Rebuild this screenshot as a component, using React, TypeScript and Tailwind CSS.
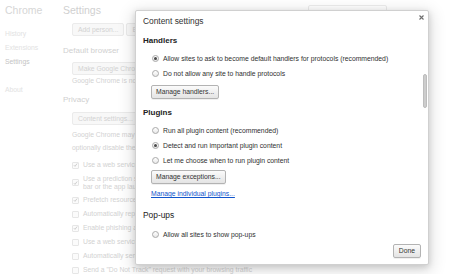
import React from 'react';

const navItems = [
    { label: 'History', active: false },
    { label: 'Extensions', active: false },
    { label: 'Settings', active: true },
];

const privacyChecks: { label: string[]; checked: boolean }[] = [
    { label: ['Use a web service to help resolve navigation errors'], checked: true },
    { label: ['Use a prediction service to help complete searches and URLs typed in the address', 'bar or the app launcher search box'], checked: true },
    { label: ['Prefetch resources to load pages more quickly'], checked: true },
    { label: ['Automatically report details of possible security incidents to Google'], checked: false },
    { label: ['Enable phishing and malware protection'], checked: true },
    { label: ['Use a web service to help resolve spelling errors'], checked: false },
    { label: ['Automatically send usage statistics and crash reports to Google'], checked: false },
    { label: ['Send a "Do Not Track" request with your browsing traffic'], checked: false },
];

const BgButton: React.FC<{ label: string }> = ({ label }) => (
    <div className="h-[13px] px-[5px] flex items-center rounded-[2px] border border-[#ebebeb] bg-[#f8f8f8] text-[6.8px] leading-[8px] text-[#d2d2d2] whitespace-nowrap shrink-0">
        {label}
    </div>
);

const BgCheck: React.FC<{ checked: boolean }> = ({ checked }) => (
    <span className="w-[7px] h-[7px] rounded-[1px] border border-[#e6e6e6] bg-[#fbfbfb] flex items-center justify-center shrink-0">
        {checked && (
            <svg width="6" height="6" viewBox="0 0 6 6">
                <path d="M1 3.2 L2.4 4.6 L5 1.2" fill="none" stroke="#c4c4c4" strokeWidth="1" />
            </svg>
        )}
    </span>
);

const Radio: React.FC<{ checked?: boolean }> = ({ checked }) => (
    <span className="w-[7px] h-[7px] rounded-full border border-[#a9a9a9] bg-linear-to-b from-white to-[#e8e8e8] flex items-center justify-center shrink-0">
        {checked && <span className="w-[3px] h-[3px] rounded-full bg-[#4a4a4a]" />}
    </span>
);

const RadioRow: React.FC<{ label: string; checked?: boolean }> = ({ label, checked }) => (
    <div className="h-[15px] pl-[9px] flex items-center gap-[4px]">
        <Radio checked={checked} />
        <span className="text-[6.8px] leading-[8px] text-[#303030] whitespace-nowrap">{label}</span>
    </div>
);

const DlgButton: React.FC<{ label: string; className?: string }> = ({ label, className = '' }) => (
    <button className={`h-[14px] px-[4px] w-fit flex items-center rounded-[2px] border border-[#b3b3b3] bg-linear-to-b from-[#fbfbfb] to-[#e4e4e4] text-[6.8px] leading-[8px] text-[#333] whitespace-nowrap shadow-[0_1px_0_rgba(0,0,0,0.06)] ${className}`}>
        {label}
    </button>
);

const ContentSettingsDialog: React.FC = () => (
    <div className="absolute left-[135px] top-[10px] w-[294px] h-[255px] bg-white rounded-[2px] border border-[#d0d0d0] shadow-[0_2px_6px_rgba(0,0,0,0.15),0_4px_16px_3px_rgba(0,0,0,0.12)] flex flex-col">
        {/* header */}
        <div className="h-[20px] shrink-0 pl-[7px] pr-[4px] flex items-center justify-between">
            <span className="text-[8.4px] leading-[10px] text-[#333]">Content settings</span>
            <svg width="5" height="5" viewBox="0 0 5 5" className="self-start mt-[4px]">
                <path d="M0.5 0.5 L4.5 4.5 M4.5 0.5 L0.5 4.5" stroke="#6e6e6e" strokeWidth="1.1" />
            </svg>
        </div>

        {/* scrolling body */}
        <div className="relative h-[213px] shrink-0 overflow-hidden pl-[7px]">
            <div className="h-[20px] flex items-center text-[8px] leading-[10px] font-bold text-[#222]">Handlers</div>
            <RadioRow label="Allow sites to ask to become default handlers for protocols (recommended)" checked />
            <RadioRow label="Do not allow any site to handle protocols" />
            <DlgButton label="Manage handlers..." className="mt-[4px] ml-[8px]" />

            <div className="mt-[4px] h-[20px] flex items-center text-[8px] leading-[10px] font-bold text-[#222]">Plugins</div>
            <RadioRow label="Run all plugin content (recommended)" />
            <RadioRow label="Detect and run important plugin content" checked />
            <RadioRow label="Let me choose when to run plugin content" />
            <DlgButton label="Manage exceptions..." className="mt-[2px] ml-[8px]" />
            <div className="mt-[2px] h-[16px] pl-[8px] flex items-center">
                <span className="text-[6.8px] leading-[8px] text-[#1155cc] underline whitespace-nowrap">Manage individual plugins...</span>
            </div>

            <div className="mt-[3px] h-[20px] flex items-center text-[8.4px] leading-[10px] text-[#222]">Pop-ups</div>
            <div className="mt-[2px]">
                <RadioRow label="Allow all sites to show pop-ups" />
            </div>

            {/* scrollbar */}
            <div className="absolute right-[1px] top-[43px] w-[4px] h-[34px] rounded-[2px] bg-[#cdcdcd] border border-[#bdbdbd]" />
        </div>

        {/* footer */}
        <div className="flex-1 flex justify-end pr-[7px]">
            <DlgButton label="Done" className="px-[5px]" />
        </div>
    </div>
);

export default function App() {
    return (
        <div className="relative w-[449px] h-[274px] overflow-hidden bg-white flex font-['Liberation_Sans',Arial,sans-serif]">
            {/* left nav */}
            <nav className="w-[63px] shrink-0 pl-[5px]">
                <div className="h-[20px] flex items-center text-[10.5px] leading-[12px] text-[#d6d6d6]">Chrome</div>
                <div className="mt-[7px]">
                    {navItems.map((item) => (
                        <div
                            key={item.label}
                            className={`h-[14px] flex items-center text-[6.8px] leading-[8px] ${item.active ? 'text-[#c4c4c4]' : 'text-[#e2e2e2]'}`}
                        >
                            {item.label}
                        </div>
                    ))}
                </div>
                <div className="mt-[14px] h-[14px] flex items-center text-[6.8px] leading-[8px] text-[#e2e2e2]">About</div>
            </nav>

            {/* settings page behind the overlay */}
            <main className="flex-1 min-w-0">
                <div className="h-[20px] flex justify-between pr-[62px]">
                    <span className="self-center text-[10.5px] leading-[12px] text-[#d0d0d0]">Settings</span>
                    <div className="mt-[5px] w-[79px] h-[14px] rounded-[2px] border border-[#ececec]" />
                </div>

                <div className="pl-[9px]">
                    <div className="mt-[3px] flex gap-[2px]">
                        <BgButton label="Add person..." />
                        <BgButton label="Edit..." />
                        <BgButton label="Remove..." />
                    </div>
                </div>

                <div className="mt-[5px] h-[20px] flex items-center text-[8px] leading-[10px] text-[#d0d0d0]">Default browser</div>
                <div className="pl-[9px]">
                    <div className="mt-[1px] flex">
                        <BgButton label="Make Google Chrome the default browser" />
                    </div>
                    <div className="h-[12px] flex items-center text-[6.8px] leading-[8px] text-[#d2d2d2] whitespace-nowrap">
                        Google Chrome is not currently your default browser.
                    </div>
                </div>

                <div className="mt-[3px] h-[20px] flex items-center text-[8px] leading-[10px] text-[#d0d0d0]">Privacy</div>
                <div className="pl-[9px]">
                    <div className="mt-[2px] flex gap-[2px]">
                        <BgButton label="Content settings..." />
                        <BgButton label="Clear browsing data..." />
                    </div>
                    <p className="mt-[4px] text-[6.8px] leading-[12.5px] text-[#d2d2d2] whitespace-nowrap">
                        Google Chrome may use web services to improve your browsing experience. You may
                        <br />
                        optionally disable these services.
                    </p>
                    <div className="mt-[4px]">
                        {privacyChecks.map((c, i) => (
                            <div
                                key={i}
                                className={`flex items-center gap-[4px] ${c.label.length > 1 ? 'h-[21px]' : 'h-[14px]'}`}
                            >
                                <BgCheck checked={c.checked} />
                                <span className="text-[6.8px] leading-[8px] text-[#d2d2d2] whitespace-nowrap">
                                    {c.label.map((l, j) => (
                                        <span key={j} className="block">{l}</span>
                                    ))}
                                </span>
                            </div>
                        ))}
                    </div>
                </div>
            </main>

            <ContentSettingsDialog />
        </div>
    );
}
